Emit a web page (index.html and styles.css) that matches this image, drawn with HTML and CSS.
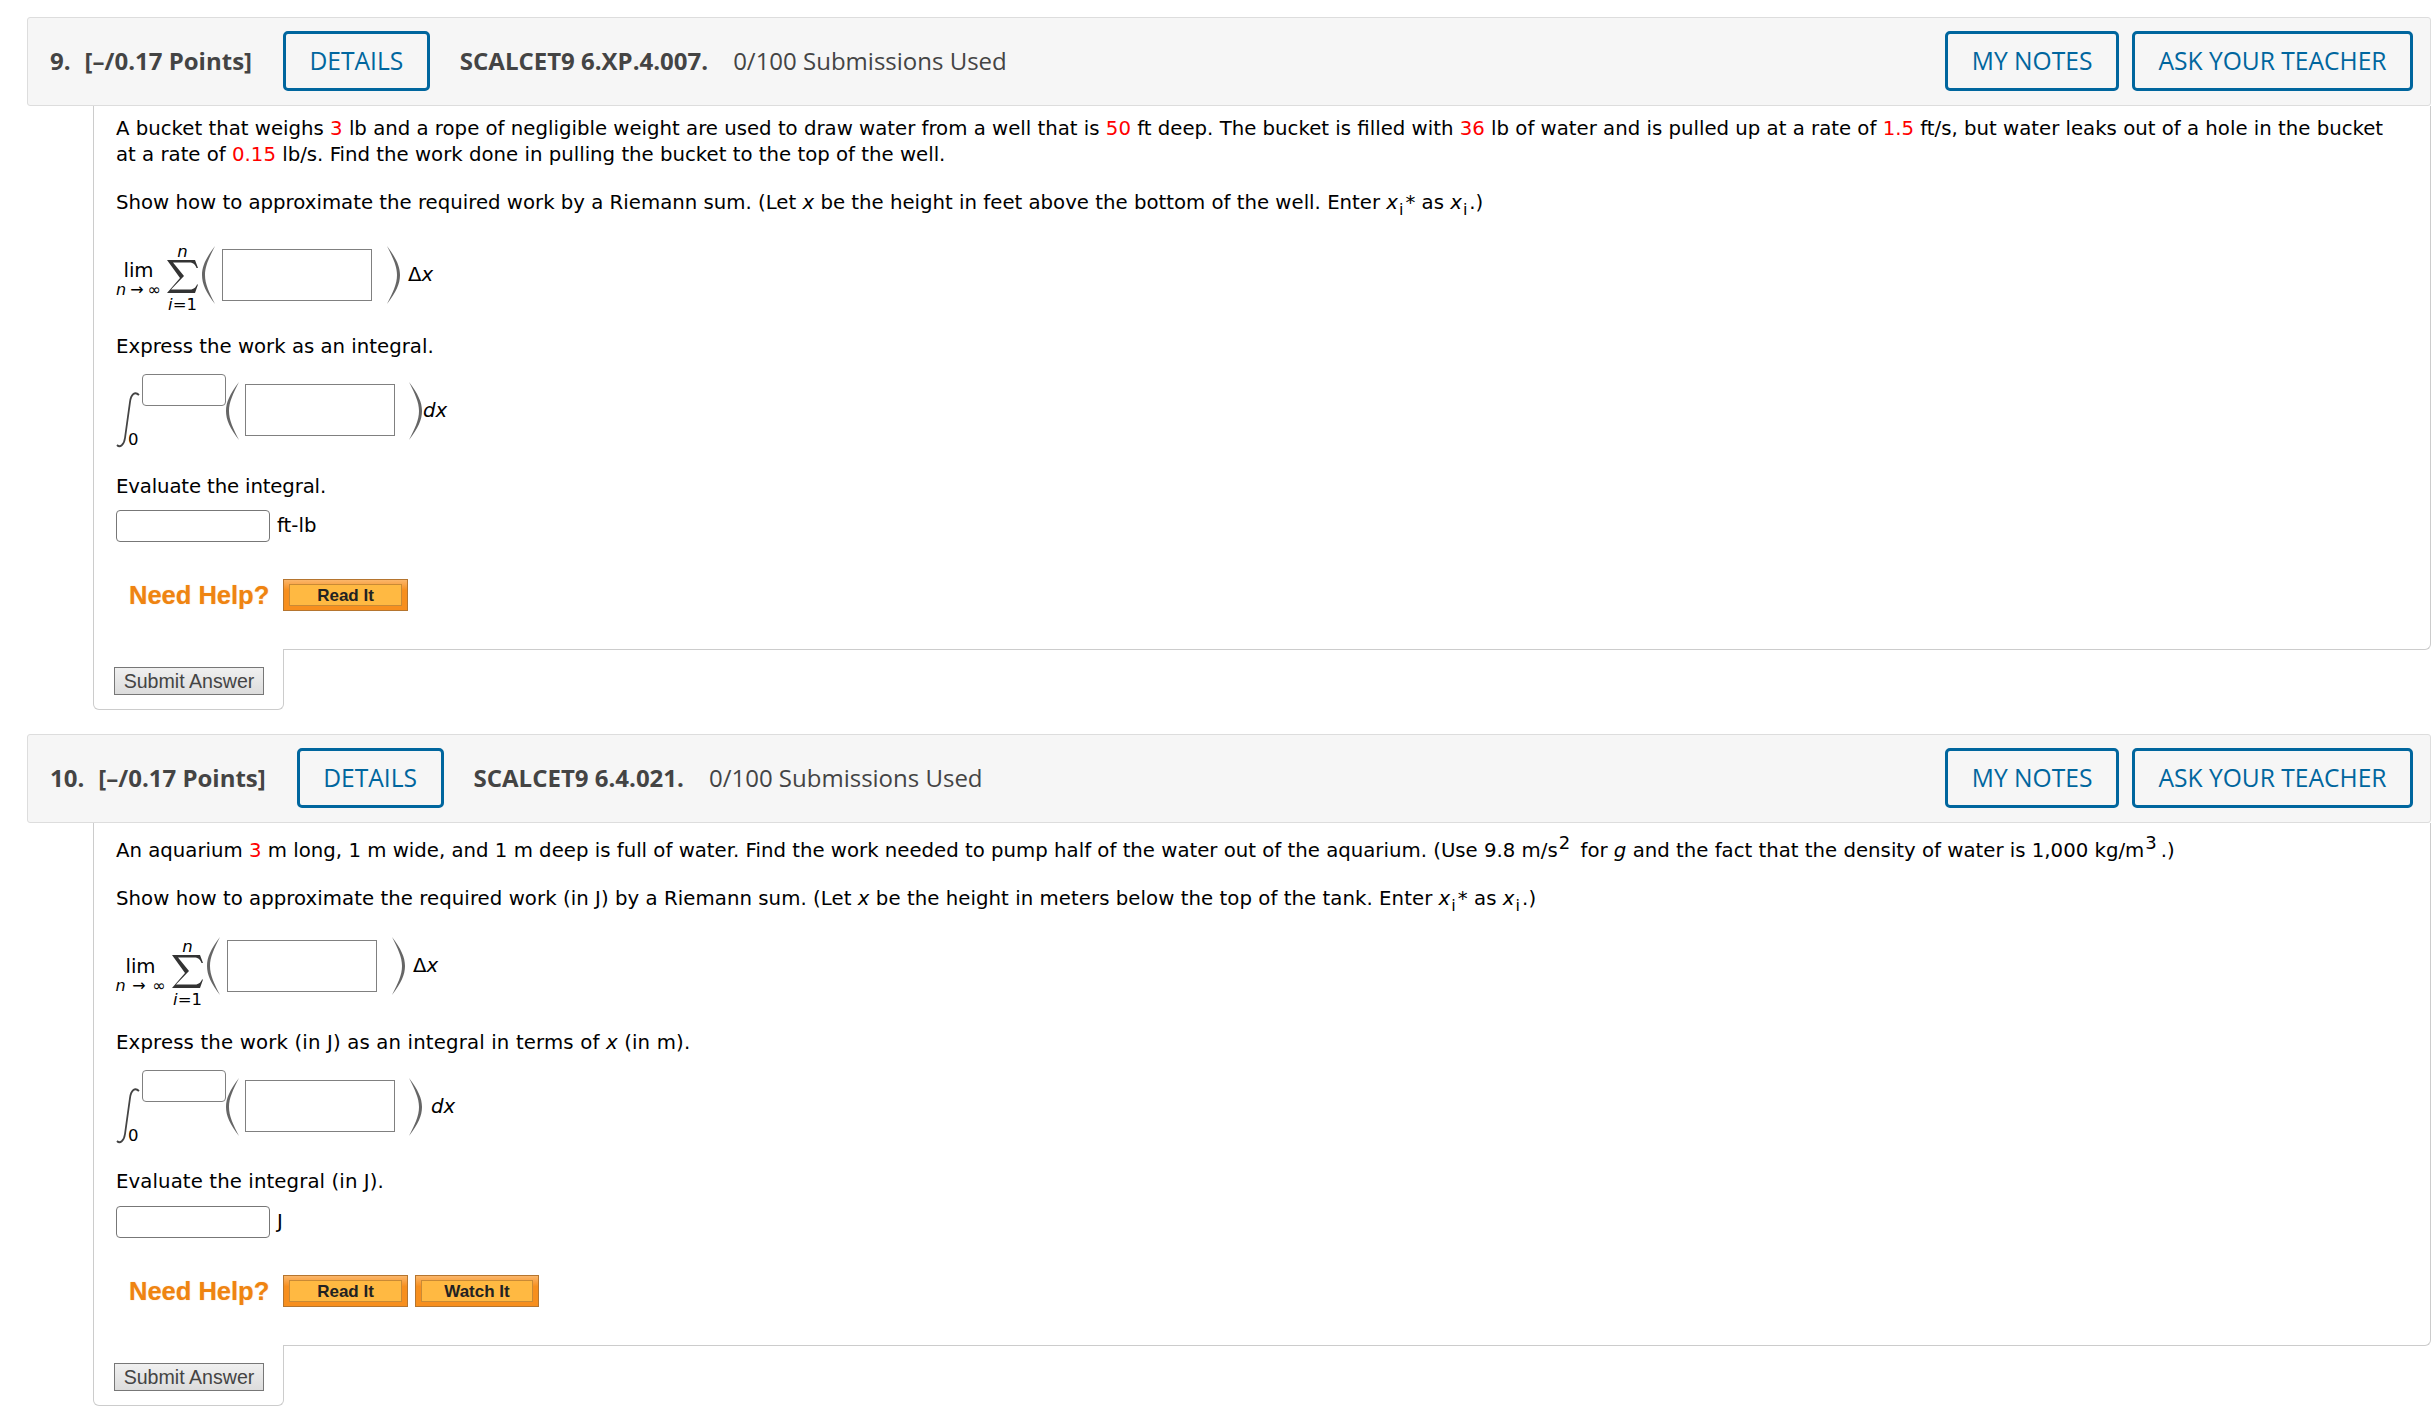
FILE: index.html
```html
<!DOCTYPE html>
<html lang="en">
<head>
    <meta charset="UTF-8">
    <title>Assignment</title>
    <link rel="stylesheet" href="styles.css">
</head>
<body>
    <!-- Question 9 -->
    <section class="question">
        <div class="q-header">
            <span class="q-num">9.</span>
            <span class="q-points">[–/0.17 Points]</span>
            <a class="btn btn-details">DETAILS</a>
            <span class="q-code">SCALCET9 6.XP.4.007.</span>
            <span class="q-subs">0/100 Submissions Used</span>
            <div class="q-actions">
                <a class="btn">MY NOTES</a>
                <a class="btn">ASK YOUR TEACHER</a>
            </div>
        </div>
        <div class="q-body">
            <p class="first">A bucket that weighs <span class="red">3</span> lb and a rope of negligible weight are used to draw water from a well that is <span class="red">50</span> ft deep. The bucket is filled with <span class="red">36</span> lb of water and is pulled up at a rate of <span class="red">1.5</span> ft/s, but water leaks out of a hole in the bucket<br>at a rate of <span class="red">0.15</span> lb/s. Find the work done in pulling the bucket to the top of the well.</p>
            <p class="next">Show how to approximate the required work by a Riemann sum. (Let <i>x</i> be the height in feet above the bottom of the well. Enter <i>x</i><sub>i</sub>* as <i>x</i><sub>i</sub>.)</p>

            <div class="math-sum">
                <div class="lim"><span>lim</span><i class="lim-to">n<b>→</b>∞</i></div>
                <div class="sigma">
                    <i>n</i>
                    <svg width="31" height="33" viewBox="0 0 31 33"><path d="M0 0H28L31 8H29.5C28 4 26 2.5 22 2.5H6L17 16 4 29.5H23C27 29.5 29 27 30 24.5H31L28 33H0L13 18Z" fill="#333"/></svg>
                    <span><i>i</i>=1</span>
                </div>
                <svg class="paren" width="13" height="58" viewBox="0 0 13 58"><path d="M13 0C4 12 0 20 0 29 0 38 4 46 13 58 7 46 3 38 3 29 3 20 7 12 13 0Z" fill="#666"/></svg>
                <input class="box-wide" type="text">
                <svg class="paren paren-r" width="13" height="58" viewBox="0 0 13 58"><path d="M0 0C9 12 13 20 13 29 13 38 9 46 0 58 6 46 10 38 10 29 10 20 6 12 0 0Z" fill="#666"/></svg>
                <span class="dx"><span class="up">Δ</span><i>x</i></span>
            </div>

            <p class="after-math">Express the work as an integral.</p>

            <div class="math-int">
                <div class="int-sign">
                    <svg width="24" height="56" viewBox="0 0 24 56"><path d="M23 3C19-1 15 2 14 10L9 46C8 53 4 56 1 53" fill="none" stroke="#444" stroke-width="1.8"/></svg>
                    <span class="int-low">0</span>
                </div>
                <input class="box-limit" type="text">
                <div class="int-main">
                    <svg class="paren" width="13" height="58" viewBox="0 0 13 58"><path d="M13 0C4 12 0 20 0 29 0 38 4 46 13 58 7 46 3 38 3 29 3 20 7 12 13 0Z" fill="#666"/></svg>
                    <input class="box-wide" type="text">
                    <svg class="paren paren-r" width="13" height="58" viewBox="0 0 13 58"><path d="M0 0C9 12 13 20 13 29 13 38 9 46 0 58 6 46 10 38 10 29 10 20 6 12 0 0Z" fill="#666"/></svg>
                    <i class="dx-tight">dx</i>
                </div>
            </div>

            <p class="after-int tight">Evaluate the integral.</p>
            <div class="answer"><input class="box-answer" type="text"><span>ft-lb</span></div>

            <div class="help">
                <span class="help-label">Need Help?</span>
                <a class="help-btn"><span>Read It</span></a>
            </div>
        </div>
        <div class="submit-tab"><button class="submit" type="button">Submit Answer</button></div>
    </section>

    <!-- Question 10 -->
    <section class="question">
        <div class="q-header">
            <span class="q-num">10.</span>
            <span class="q-points">[–/0.17 Points]</span>
            <a class="btn btn-details">DETAILS</a>
            <span class="q-code">SCALCET9 6.4.021.</span>
            <span class="q-subs">0/100 Submissions Used</span>
            <div class="q-actions">
                <a class="btn">MY NOTES</a>
                <a class="btn">ASK YOUR TEACHER</a>
            </div>
        </div>
        <div class="q-body">
            <p class="first tall">An aquarium <span class="red">3</span> m long, 1 m wide, and 1 m deep is full of water. Find the work needed to pump half of the water out of the aquarium. (Use 9.8 m/s<sup>2</sup> for <i>g</i> and the fact that the density of water is 1,000 kg/m<sup>3</sup>.)</p>
            <p class="next loose">Show how to approximate the required work (in J) by a Riemann sum. (Let <i>x</i> be the height in meters below the top of the tank. Enter <i>x</i><sub>i</sub>* as <i>x</i><sub>i</sub>.)</p>

            <div class="math-sum shallow">
                <div class="lim lim-wide"><span>lim</span><i class="lim-to">n<b> → </b>∞</i></div>
                <div class="sigma">
                    <i>n</i>
                    <svg width="31" height="33" viewBox="0 0 31 33"><path d="M0 0H28L31 8H29.5C28 4 26 2.5 22 2.5H6L17 16 4 29.5H23C27 29.5 29 27 30 24.5H31L28 33H0L13 18Z" fill="#333"/></svg>
                    <span><i>i</i>=1</span>
                </div>
                <svg class="paren" width="13" height="58" viewBox="0 0 13 58"><path d="M13 0C4 12 0 20 0 29 0 38 4 46 13 58 7 46 3 38 3 29 3 20 7 12 13 0Z" fill="#666"/></svg>
                <input class="box-wide" type="text">
                <svg class="paren paren-r" width="13" height="58" viewBox="0 0 13 58"><path d="M0 0C9 12 13 20 13 29 13 38 9 46 0 58 6 46 10 38 10 29 10 20 6 12 0 0Z" fill="#666"/></svg>
                <span class="dx"><span class="up">Δ</span><i>x</i></span>
            </div>

            <p class="after-math spread">Express the work (in J) as an integral in terms of <i>x</i> (in m).</p>

            <div class="math-int">
                <div class="int-sign">
                    <svg width="24" height="56" viewBox="0 0 24 56"><path d="M23 3C19-1 15 2 14 10L9 46C8 53 4 56 1 53" fill="none" stroke="#444" stroke-width="1.8"/></svg>
                    <span class="int-low">0</span>
                </div>
                <input class="box-limit" type="text">
                <div class="int-main">
                    <svg class="paren" width="13" height="58" viewBox="0 0 13 58"><path d="M13 0C4 12 0 20 0 29 0 38 4 46 13 58 7 46 3 38 3 29 3 20 7 12 13 0Z" fill="#666"/></svg>
                    <input class="box-wide" type="text">
                    <svg class="paren paren-r" width="13" height="58" viewBox="0 0 13 58"><path d="M0 0C9 12 13 20 13 29 13 38 9 46 0 58 6 46 10 38 10 29 10 20 6 12 0 0Z" fill="#666"/></svg>
                    <i class="dx-loose">dx</i>
                </div>
            </div>

            <p class="after-int close">Evaluate the integral (in J).</p>
            <div class="answer"><input class="box-answer" type="text"><span>J</span></div>

            <div class="help">
                <span class="help-label">Need Help?</span>
                <a class="help-btn"><span>Read It</span></a>
                <a class="help-btn help-btn-watch"><span>Watch It</span></a>
            </div>
        </div>
        <div class="submit-tab"><button class="submit" type="button">Submit Answer</button></div>
    </section>
</body>
</html>
```

FILE: styles.css
```css
/* Homework page styling */
html, body {
    height: 100%;
}

body {
    margin: 0;
    padding-top: 17px;
    box-sizing: border-box;
    overflow: hidden;
    background-color: #fff;
    color: #000;
    font-family: 'DejaVu Sans', sans-serif;
    font-size: 19.73px;
    line-height: 26px;
}

p {
    margin: 0;
}

.question {
    margin-left: 27px;
    margin-bottom: 24px;
}

/* Header bar */
.q-header {
    display: flex;
    align-items: center;
    box-sizing: border-box;
    height: 89px;
    padding: 0 17px 2px 22px;
    background-color: #f6f6f6;
    border: 1px solid #ddd;
    border-radius: 3px;
    color: #444;
    font-family: 'Open Sans', sans-serif;
    font-size: 24px;
}

.q-num {
    font-weight: 700;
    margin-right: 14px;
}

.q-points {
    font-weight: 700;
    margin-right: 31px;
}

.q-code {
    font-weight: 700;
    margin: 0 25px 0 30px;
}

.q-actions {
    display: flex;
    gap: 13px;
    margin-left: auto;
}

.btn {
    display: block;
    box-sizing: border-box;
    height: 60px;
    padding: 0 23.5px;
    border: 3px solid #00669e;
    border-radius: 5px;
    color: #00669e;
    font-size: 24.6px;
    line-height: 54px;
}

/* Question body */
.q-body {
    box-sizing: border-box;
    margin-left: 66px;
    padding: 0 20px 38px 22px;
    border: 1px solid #ccc;
    border-top: none;
    border-bottom-right-radius: 6px;
}

.first {
    padding-top: 10px;
}

.first.tall {
    padding-top: 15px;
}

.next {
    margin-top: 21px;
    margin-bottom: -1px;
    padding-top: 1px;
}

.next.loose {
    letter-spacing: 0.05px;
}

.red {
    color: #f00;
}

sub {
    padding: 0 2px 0 1px;
    font-size: 16px;
    line-height: 0;
    vertical-align: -6px;
}

sup {
    padding: 0 4px 0 1px;
    font-size: 18px;
    line-height: 0;
    vertical-align: 8px;
}

/* Riemann sum row */
.math-sum {
    display: flex;
    align-items: center;
    height: 82px;
    margin-top: 19px;
}

.math-sum.shallow {
    margin-top: 14px;
}

.lim {
    display: flex;
    flex-direction: column;
    align-items: center;
    flex: none;
    width: 45px;
    margin-top: 10px;
    margin-right: 6px;
    line-height: 19px;
}

.lim-wide {
    width: 49px;
    margin-top: 19px;
    margin-right: 7px;
}

.lim-to {
    font-size: 16px;
    white-space: pre;
}

.lim-to b {
    padding: 0 4px;
    font-weight: 400;
    font-style: normal;
}

.lim-wide .lim-to b {
    padding: 0 1.5px;
}

.sigma {
    display: flex;
    flex-direction: column;
    align-items: center;
    align-self: flex-start;
    flex: none;
    width: 31px;
    margin-top: 10px;
    font-size: 16.5px;
    line-height: 16px;
}

.shallow .sigma {
    margin-top: 14px;
}

.sigma svg {
    display: block;
}

.sigma span {
    line-height: 24px;
}

.paren {
    flex: none;
    margin-left: 4px;
}

.paren-r {
    margin-left: 15px;
}

.box-wide {
    box-sizing: border-box;
    flex: none;
    width: 150px;
    height: 52px;
    margin: 0 0 0 7px;
    padding: 0;
    border: 1px solid #808080;
    border-radius: 0;
    background-color: #fff;
}

.dx {
    margin-left: 8px;
}

.up {
    font-style: normal;
}

.after-math {
    margin-top: 17px;
    margin-bottom: -1px;
    padding-top: 1px;
}

.after-math.spread {
    margin-top: 22px;
    letter-spacing: 0.15px;
}

/* Integral row */
.math-int {
    display: flex;
    align-items: flex-start;
    height: 82px;
    margin-top: 15px;
}

.int-sign {
    position: relative;
    flex: none;
    width: 26px;
    height: 74px;
}

.int-sign svg {
    display: block;
    margin-top: 18px;
}

.int-low {
    position: absolute;
    left: 12px;
    bottom: 0;
    font-size: 16.5px;
    line-height: 16px;
}

.box-limit {
    box-sizing: border-box;
    flex: none;
    width: 84px;
    height: 32px;
    margin: 0;
    padding: 0;
    border: 1px solid #808080;
    border-radius: 4px;
    background-color: #fff;
}

.int-main {
    display: flex;
    align-items: center;
    height: 58px;
    margin-top: 8px;
}

.int-main .paren {
    margin-left: 0;
}

.int-main .box-wide {
    margin-top: -2px;
    margin-left: 6px;
}

.int-main .paren-r {
    margin-left: 14px;
}

.dx-tight {
    margin-left: 1px;
}

.dx-loose {
    margin-left: 9px;
}

.after-int {
    margin-top: 17px;
    margin-bottom: -1px;
    padding-top: 1px;
}

.after-int.tight {
    letter-spacing: -0.15px;
}

.after-int.close {
    margin-top: 16px;
    margin-bottom: 0;
    letter-spacing: 0.1px;
}

/* Final answer */
.answer {
    display: flex;
    align-items: center;
    margin-top: 11px;
}

.box-answer {
    box-sizing: border-box;
    width: 154px;
    height: 32px;
    margin: 0 7px 0 0;
    padding: 0;
    border: 1px solid #777;
    border-radius: 4px;
    background-color: #fff;
}

.answer span {
    margin-top: -1px;
}

/* Need help row */
.help {
    display: flex;
    align-items: center;
    margin-top: 37px;
    padding-left: 13px;
}

.help-label {
    width: 154px;
    color: #ef8411;
    font-family: 'Liberation Sans', sans-serif;
    font-size: 25.5px;
    font-weight: 700;
    text-shadow: 0 0 1px rgba(239, 132, 17, 0.5);
}

.help-btn {
    display: block;
    box-sizing: border-box;
    width: 125px;
    height: 32px;
    padding: 4px 5px 4px 5px;
    background: linear-gradient(#fbb66a, #f78f1e 35%, #f78f1e);
    border: 1px solid #b5752f;
}

.help-btn span {
    display: block;
    box-sizing: border-box;
    height: 22px;
    background-color: #ffb942;
    border: 1px solid #c98a35;
    color: #222;
    font-family: 'Liberation Sans', sans-serif;
    font-size: 17px;
    font-weight: 700;
    line-height: 21px;
    text-align: center;
}

.help-btn-watch {
    width: 124px;
    margin-left: 7px;
}

/* Submit tab hangs under the body */
.submit-tab {
    box-sizing: border-box;
    width: 191px;
    height: 61px;
    margin: -1px 0 0 66px;
    padding: 18px 0 0 20px;
    background-color: #fff;
    border: 1px solid #ccc;
    border-top: none;
    border-radius: 0 0 6px 6px;
}

.submit {
    display: block;
    box-sizing: border-box;
    width: 150px;
    height: 28px;
    padding: 0;
    background: linear-gradient(#f0f0f0, #dcdcdc);
    border: 1px solid #777;
    border-radius: 0;
    color: #444;
    font-family: 'Liberation Sans', sans-serif;
    font-size: 19.6px;
    line-height: 24px;
}
```
